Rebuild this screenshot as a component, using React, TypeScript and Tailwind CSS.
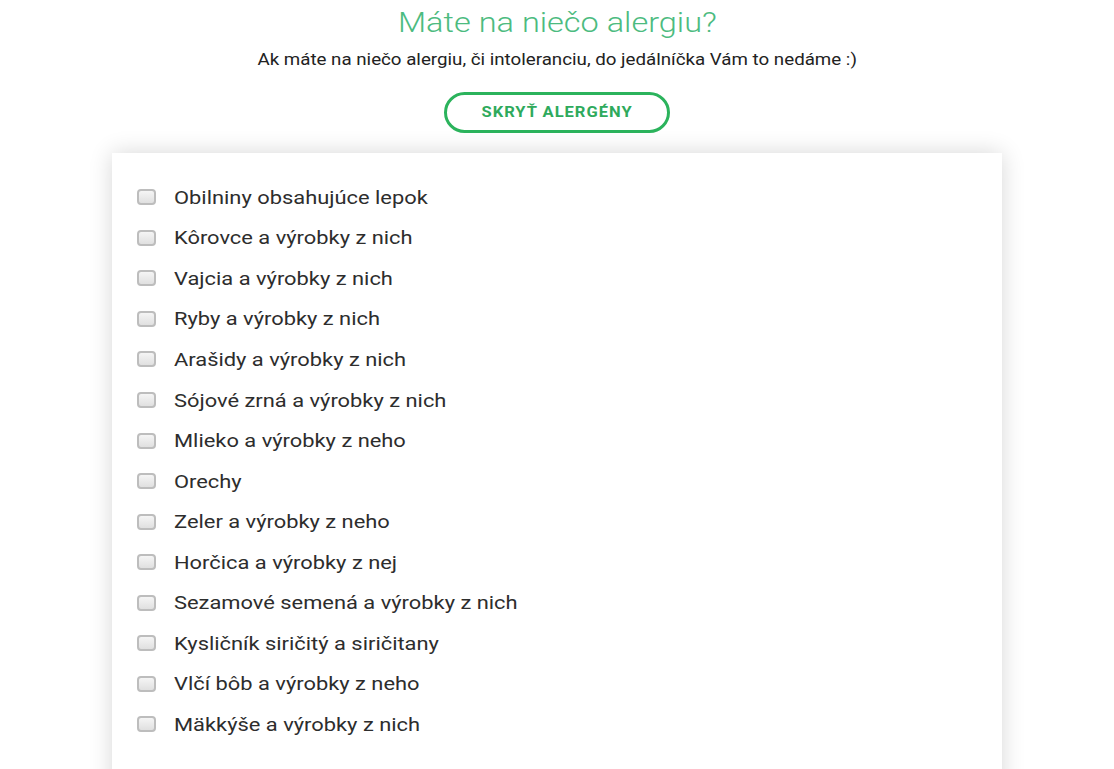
const allergens = [
  "Obilniny obsahujúce lepok",
  "Kôrovce a výrobky z nich",
  "Vajcia a výrobky z nich",
  "Ryby a výrobky z nich",
  "Arašidy a výrobky z nich",
  "Sójové zrná a výrobky z nich",
  "Mlieko a výrobky z neho",
  "Orechy",
  "Zeler a výrobky z neho",
  "Horčica a výrobky z nej",
  "Sezamové semená a výrobky z nich",
  "Kysličník siričitý a siričitany",
  "Vlčí bôb a výrobky z neho",
  "Mäkkýše a výrobky z nich",
];

export default function App() {
  return (
    <div className="min-h-[769px] bg-white overflow-hidden" style={{ fontFamily: "Roboto, 'Noto Sans', sans-serif" }}>
      <div className="flex flex-col items-center">
        <h1 className="mt-[6px] text-[28px] leading-[34px] font-light text-[#4cbb80]">
          <span className="inline-block scale-x-[1.16]">Máte na niečo alergiu?</span>
        </h1>
        <p className="mt-[11px] text-[16px] leading-[18px] text-[#222]">
          <span className="inline-block scale-x-[1.17]">
            Ak máte na niečo alergiu, či intoleranciu, do jedálníčka Vám to nedáme :)
          </span>
        </p>
        <button className="mt-[23px] w-[226px] h-[41px] rounded-full border-[3px] border-[#2bb35c] text-[14px] font-bold tracking-[0.06em] text-[#2eaa5c]">
          <span className="inline-block scale-x-[1.18]">SKRYŤ ALERGÉNY</span>
        </button>
      </div>

      <div className="ml-[112px] mt-[20px] w-[890px] bg-white shadow-[0_0_22px_rgba(0,0,0,0.16)] pt-[24px] pb-[60px]">
        <ul className="flex flex-col">
          {allergens.map((a) => (
            <li key={a} className="flex items-center h-[40.55px] pl-[25px]">
              <span className="w-[19px] h-[16px] rounded-[4px] border-2 border-[#bdbdbd] bg-gradient-to-b from-[#f5f5f5] to-[#e0e0e0]" />
              <span className="ml-[18px] text-[18px] text-[#2d2d2d] inline-block origin-left scale-x-[1.215]">{a}</span>
            </li>
          ))}
        </ul>
      </div>
    </div>
  );
}
